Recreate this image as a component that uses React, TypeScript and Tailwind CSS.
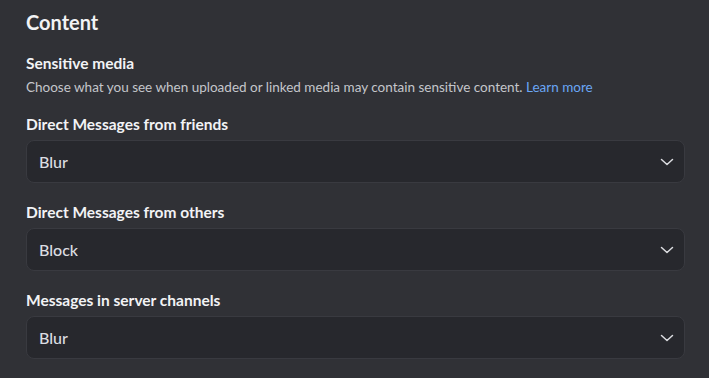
const options = [
  { label: 'Direct Messages from friends', value: 'Blur' },
  { label: 'Direct Messages from others', value: 'Block' },
  { label: 'Messages in server channels', value: 'Blur' },
];

function Select({ value }: { value: string }) {
  return (
    <div className="flex h-[43px] items-center justify-between rounded-lg border border-[#393a40] bg-[#27282d] pl-[12px] pr-[10px]">
      <span className="text-[16px] font-medium text-[#dcdde1]">{value}</span>
      <svg width="14" height="8" viewBox="0 0 14 8" fill="none" className="text-[#dcdde1]">
        <path d="M1.5 1.5 7 6.5l5.5-5" stroke="currentColor" strokeWidth="1.5" strokeLinecap="round" strokeLinejoin="round" />
      </svg>
    </div>
  );
}

export default function App() {
  return (
    <div
      className="h-[378px] w-[709px] bg-[#303136] pl-[26px] pr-[24px] pt-[9px]"
      style={{ fontFamily: 'Lato, "Noto Sans", sans-serif' }}
    >
      <h1 className="text-[20px] font-bold leading-[26px] text-[#f2f3f5]">Content</h1>

      <h2 className="mt-[18px] text-[15.5px] font-bold leading-[20px] text-[#f2f3f5]">Sensitive media</h2>
      <p className="mt-[5px] text-[13.5px] leading-[18px] text-[#c4c6cb]">
        Choose what you see when uploaded or linked media may contain sensitive content.{' '}
        <span className="text-[#6aa6f5]">Learn more</span>
      </p>

      <div className="mt-[18px] flex flex-col gap-[19px]">
        {options.map((o) => (
          <div key={o.label}>
            <div className="mb-[6px] text-[15.5px] font-bold leading-[20px] text-[#f2f3f5]">{o.label}</div>
            <Select value={o.value} />
          </div>
        ))}
      </div>
    </div>
  );
}
